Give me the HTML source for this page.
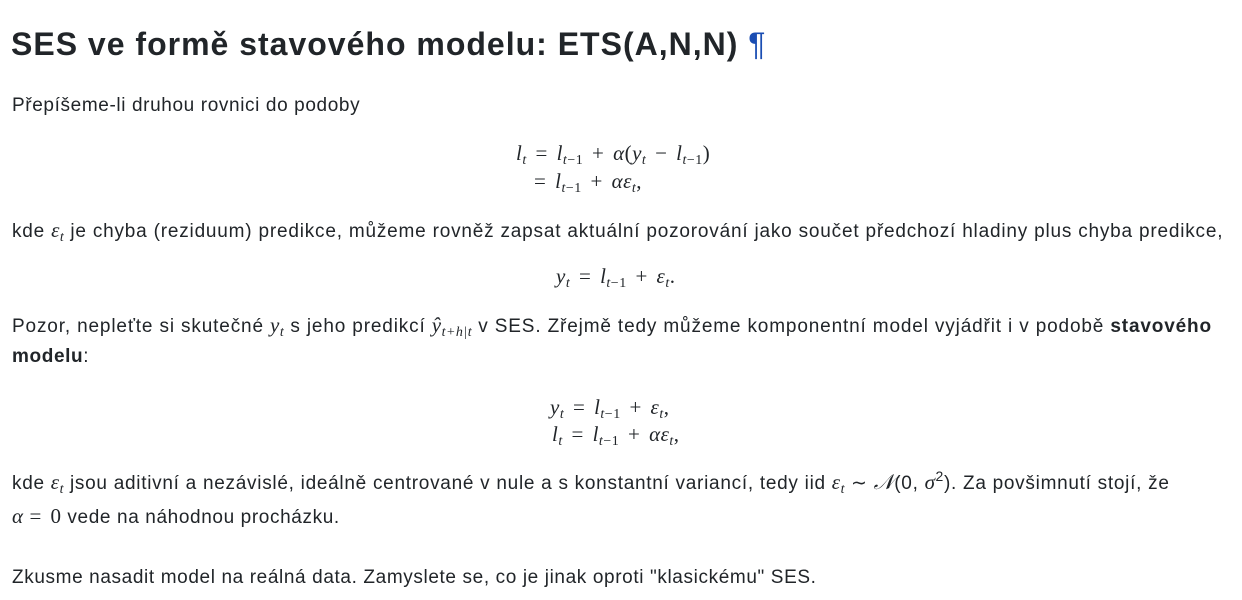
<!DOCTYPE html>
<html><head><meta charset="utf-8"><style>
body{margin:0;background:#fff;color:#212529;font-family:"Liberation Sans",sans-serif;}
.l{position:absolute;white-space:nowrap;font-size:19px;line-height:24px;letter-spacing:0.62px;}
h1{position:absolute;left:11px;top:22px;margin:0;font-size:32px;font-weight:bold;line-height:44px;white-space:nowrap;letter-spacing:1px;}
h1 span{color:#1a4db3;font-weight:normal;}
.m{font-family:"Liberation Serif",serif;font-size:21px;letter-spacing:0.5px;word-spacing:3px;}
i{font-family:"Liberation Serif",serif;font-size:21px;letter-spacing:0.5px;}
sub{font-size:14px;vertical-align:-4px;line-height:0;}
sup{font-size:14px;vertical-align:8px;line-height:0;}
</style></head><body>
<h1>SES ve formě stavového modelu: ETS(A,N,N) <span>¶</span></h1>
<div class="l" style="left:12px;top:94px">Přepíšeme-li druhou rovnici do podoby</div>
<div class="l m" style="left:516px;top:141px"><i>l<sub>t</sub></i> = <i>l<sub>t</sub></i><sub>−1</sub> + <i>α</i>(<i>y<sub>t</sub></i> − <i>l<sub>t</sub></i><sub>−1</sub>)</div>
<div class="l m" style="left:534px;top:169px">= <i>l<sub>t</sub></i><sub>−1</sub> + <i>αε<sub>t</sub></i>,</div>
<div class="l" style="left:12px;top:218px;letter-spacing:0.8px">kde <i>ε<sub>t</sub></i> je chyba (reziduum) predikce, můžeme rovněž zapsat aktuální pozorování jako součet předchozí hladiny plus chyba predikce,</div>
<div class="l m" style="left:556px;top:264px"><i>y<sub>t</sub></i> = <i>l<sub>t</sub></i><sub>−1</sub> + <i>ε<sub>t</sub></i>.</div>
<div class="l" style="left:12px;top:313px;letter-spacing:0.85px">Pozor, nepleťte si skutečné <i>y<sub>t</sub></i> s jeho predikcí <i>ŷ<sub>t+h|t</sub></i> v SES. Zřejmě tedy můžeme komponentní model vyjádřit i v podobě <b>stavového</b></div>
<div class="l" style="left:12px;top:345px"><b>modelu</b>:</div>
<div class="l m" style="left:550px;top:395px"><i>y<sub>t</sub></i> = <i>l<sub>t</sub></i><sub>−1</sub> + <i>ε<sub>t</sub></i>,</div>
<div class="l m" style="left:552px;top:422px"><i>l<sub>t</sub></i> = <i>l<sub>t</sub></i><sub>−1</sub> + <i>αε<sub>t</sub></i>,</div>
<div class="l" style="left:12px;top:470px;letter-spacing:0.72px">kde <i>ε<sub>t</sub></i> jsou aditivní a nezávislé, ideálně centrované v nule a s konstantní variancí, tedy iid <i>ε<sub>t</sub></i> ∼ <i>𝒩</i>(0, <i>σ</i><sup>2</sup>). Za povšimnutí stojí, že</div>
<div class="l" style="left:12px;top:504px"><i>α</i> <span class="m">= 0</span> vede na náhodnou procházku.</div>
<div class="l" style="left:12px;top:566px">Zkusme nasadit model na reálná data. Zamyslete se, co je jinak oproti "klasickému" SES.</div>
</body></html>
